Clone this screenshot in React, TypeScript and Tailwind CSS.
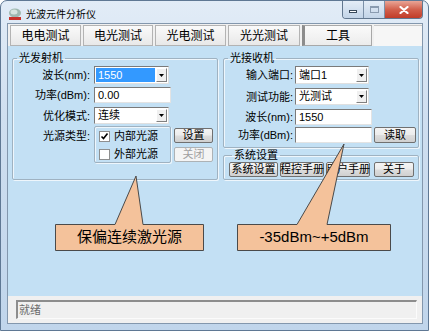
import React from 'react'

const btnFace =
  'border-[#707070] bg-[linear-gradient(#f4f4f4_0%,#ececec_48%,#dddddd_52%,#d0d0d0_100%)] text-black'

function Button({ label, className = '', disabled = false }: { label: string; className?: string; disabled?: boolean }) {
  return (
    <div
      className={`flex h-[15px] items-center justify-center whitespace-nowrap rounded-[2px] border text-[11px] leading-none ${
        disabled ? 'border-[#adb2b5] bg-[#f4f4f4] text-[#a0a0a0]' : btnFace
      } ${className}`}
    >
      {label}
    </div>
  )
}

function Combo({ value, selected = false, className = '' }: { value: string; selected?: boolean; className?: string }) {
  return (
    <div
      className={`flex border border-[#7a7a7a] border-b-[#e0e0e0] border-r-[#e0e0e0] bg-white p-px ${className}`}
    >
      <div className={`mr-px flex flex-1 items-center pl-[2px] text-[11px] ${selected ? 'bg-[#3399ff] text-white' : 'text-black'}`}>
        {value}
      </div>
      <div className="flex w-[11px] items-center justify-center border border-b-[#808080] border-l-white border-r-[#808080] border-t-white bg-[#f0f0f0]">
        <svg width="5" height="3" viewBox="0 0 5 3">
          <path d="M0 0h5L2.5 3z" fill="#000" />
        </svg>
      </div>
    </div>
  )
}

function Edit({ value = '', className = '' }: { value?: string; className?: string }) {
  return (
    <div
      className={`flex items-center border border-[#7a7a7a] border-b-[#e3e3e3] border-r-[#e3e3e3] bg-white pl-[3px] text-[11px] ${className}`}
    >
      {value}
    </div>
  )
}

function Check({ label, checked = false }: { label: string; checked?: boolean }) {
  return (
    <div className="flex h-[14px] items-center">
      <div className="flex h-[11px] w-[11px] items-center justify-center border border-[#8e8f8f] bg-white">
        {checked && (
          <svg width="9" height="9" viewBox="0 0 9 9">
            <path d="M1.5 4.5l2 2 4-5" fill="none" stroke="#000" strokeWidth="1.6" />
          </svg>
        )}
      </div>
      <span className="ml-[4px] text-[11px]">{label}</span>
    </div>
  )
}

function Label({ text, className = '' }: { text: string; className?: string }) {
  return <div className={`whitespace-nowrap text-right text-[11px] leading-[14px] ${className}`}>{text}</div>
}

const groupCls = 'rounded-[2px] border border-[#9fb2c1] shadow-[inset_1px_1px_0_#eef6fc,1px_1px_0_#eef6fc]'
const legendCls = 'ml-[4px] px-[2px] text-[11px] leading-[14px]'

const tabs = [
  { name: '电电测试', w: 'w-[71px]' },
  { name: '电光测试', w: 'w-[70px]' },
  { name: '光电测试', w: 'w-[71px]' },
  { name: '光光测试', w: 'w-[72px]' },
]

export default function App() {
  return (
    <div className="relative h-[333px] w-[431px] bg-white font-['Liberation_Sans','Noto_Sans_CJK_SC',sans-serif] text-black">
      <div className="flex h-[331px] w-[429px] flex-col rounded-t-[7px] border border-[#5f7894] bg-[linear-gradient(180deg,#e2ecf7_0%,#cfdff0_35%,#c0d5eb_100%)] pb-[6px] pl-[6px] pr-[5px]">
        {/* title bar */}
        <div className="flex h-[22px] items-start">
          <svg className="ml-px mt-[7px]" width="14" height="13" viewBox="0 0 14 13">
            <ellipse cx="7" cy="5" rx="6" ry="4.5" fill="#9fb8b0" />
            <ellipse cx="6" cy="4" rx="3.5" ry="2.5" fill="#d6e4df" />
            <rect x="1" y="9" width="12" height="3" fill="#c8322a" />
          </svg>
          <span className="ml-[4px] mt-[7px] text-[10px] leading-[13px]">光波元件分析仪</span>
          <div className="flex-1" />
          <div className="flex h-[18px] overflow-hidden rounded-b-[4px] border border-t-0 border-[#62778f]">
            <div className="flex w-[21px] items-end justify-center border-r border-[#7c90a8] bg-[linear-gradient(#e4edf7,#c3d4e8)] pb-[5px]">
              <div className="h-[3px] w-[8px] border border-[#3a4a5c] bg-white" />
            </div>
            <div className="flex w-[21px] items-center justify-center border-r border-[#7c90a8] bg-[linear-gradient(#e4edf7,#c3d4e8)]">
              <div className="h-[7px] w-[9px] border border-[#8a9bb0] border-t-2" />
            </div>
            <div className="flex w-[37px] items-center justify-center bg-[linear-gradient(#e9a596_0%,#d2604c_50%,#c13c28_100%)]">
              <svg width="10" height="8" viewBox="0 0 10 8">
                <path d="M1.5 1l7 6M8.5 1l-7 6" stroke="#fff" strokeWidth="2.2" strokeLinecap="round" />
              </svg>
            </div>
          </div>
        </div>

        {/* client */}
        <div className="flex flex-1 flex-col border border-[#8397ad] bg-[#f0f0f0]">
          {/* tabs */}
          <div className="flex h-[22px] items-end gap-[2px] pl-[2px]">
            {tabs.map((t) => (
              <div
                key={t.name}
                className={`flex h-[21px] ${t.w} items-center justify-center border border-[#b3b3b3] bg-[linear-gradient(#fafafa,#e8e8e8)] text-[12px]`}
              >
                {t.name}
              </div>
            ))}
            <div className="flex h-[21px] w-[70px] items-center justify-center border border-l-[3px] border-[#a8a8a8] border-l-[#8c8c8c] bg-[linear-gradient(#fafafa,#ececec)] text-[12px]">
              工具
            </div>
            <div className="h-[21px] flex-1 border-t border-[#c8c8c8] bg-[#f6f6f6]" />
          </div>

          {/* blue area */}
          <div className="flex flex-1 gap-[5px] bg-[#c3e0f4] pl-[4px] pr-[3px] pt-[5px]">
            {/* 光发射机 */}
            <fieldset className={`w-[206px] self-start pb-[16px] ${groupCls}`}>
              <legend className={legendCls}>光发射机</legend>
              <div className="mt-px flex items-center">
                <Label text="波长(nm):" className="mr-[4px] w-[77px]" />
                <Combo value="1550" selected className="h-[18px] w-[75px]" />
              </div>
              <div className="mt-[3px] flex items-center">
                <Label text="功率(dBm):" className="mr-[4px] w-[77px]" />
                <Edit value="0.00" className="h-[16px] w-[77px]" />
              </div>
              <div className="mt-[4px] flex items-center">
                <Label text="优化模式:" className="mr-[4px] w-[77px]" />
                <Combo value="连续" className="h-[17px] w-[75px]" />
              </div>
              <div className="mt-[2px] flex items-start">
                <Label text="光源类型:" className="mr-[4px] mt-[3px] w-[77px]" />
                <div className={`h-[37px] w-[77px] pl-[4px] pt-[2px] ${groupCls}`}>
                  <Check label="内部光源" checked />
                  <div className="mt-[4px]">
                    <Check label="外部光源" />
                  </div>
                </div>
                <div className="ml-[3px] flex flex-col">
                  <Button label="设置" className="mt-[2px] w-[39px]" />
                  <Button label="关闭" disabled className="mt-[4px] w-[39px]" />
                </div>
              </div>
            </fieldset>

            {/* right column */}
            <div className="flex w-[196px] flex-col">
              <fieldset className={`pb-[4px] ${groupCls}`}>
                <legend className={legendCls}>光接收机</legend>
                <div className="mt-px flex items-center">
                  <Label text="输入端口:" className="mr-[2px] w-[69px]" />
                  <Combo value="端口1" className="h-[18px] w-[74px]" />
                </div>
                <div className="mt-[4px] flex items-center">
                  <Label text="测试功能:" className="mr-[2px] w-[69px]" />
                  <Combo value="光测试" className="h-[17px] w-[74px]" />
                </div>
                <div className="mt-[4px] flex items-center">
                  <Label text="波长(nm):" className="mr-[2px] w-[69px]" />
                  <Edit value="1550" className="h-[16px] w-[77px]" />
                </div>
                <div className="mt-[2px] flex items-center">
                  <Label text="功率(dBm):" className="mr-[2px] w-[69px]" />
                  <Edit className="h-[16px] w-[77px]" />
                  <Button label="读取" className="ml-[2px] h-[16px] w-[42px]" />
                </div>
              </fieldset>
              <fieldset className={`pb-[2px] pl-[5px] ${groupCls}`}>
                <legend className="ml-[3px] px-[2px] text-[11px] leading-[14px]">系统设置</legend>
                <div className="flex">
                  <Button label="系统设置" className="w-[49px]" />
                  <Button label="程控手册" className="ml-[2px] w-[44px] text-[10.5px]" />
                  <Button label="用户手册" className="ml-[2px] w-[44px] text-[10.5px]" />
                  <Button label="关于" className="ml-[4px] w-[40px]" />
                </div>
              </fieldset>
            </div>
          </div>

          {/* status bar */}
          <div className="flex h-[27px] items-center pl-[8px] pr-[5px]">
            <div className="flex h-[19px] flex-1 items-center border-2 border-b-[#fbfbfb] border-l-[#8d8d8d] border-r-[#fbfbfb] border-t-[#8d8d8d] border-b border-r pl-[1px] text-[11px] text-[#6d6d6d]">
              就绪
            </div>
          </div>
        </div>
      </div>

      {/* callouts */}
      <svg className="pointer-events-none absolute left-0 top-0" width="431" height="333" viewBox="0 0 431 333">
        <path
          d="M55.5 224.5H115L136 176L143 224.5H203.5V250.5H55.5Z"
          fill="#f4c29b"
          stroke="#4a4a4a"
          strokeWidth="1"
        />
        <path
          d="M237.5 224.5H297L344 144L327 224.5H390.5V250.5H237.5Z"
          fill="#f4c29b"
          stroke="#4a4a4a"
          strokeWidth="1"
        />
      </svg>
      <div className="pointer-events-none absolute left-[56px] top-[225px] flex h-[25px] w-[147px] items-center justify-center text-[15px]">
        保偏连续激光源
      </div>
      <div className="pointer-events-none absolute left-[238px] top-[225px] flex h-[25px] w-[152px] items-center justify-center text-[15px]">
        -35dBm~+5dBm
      </div>
    </div>
  )
}
